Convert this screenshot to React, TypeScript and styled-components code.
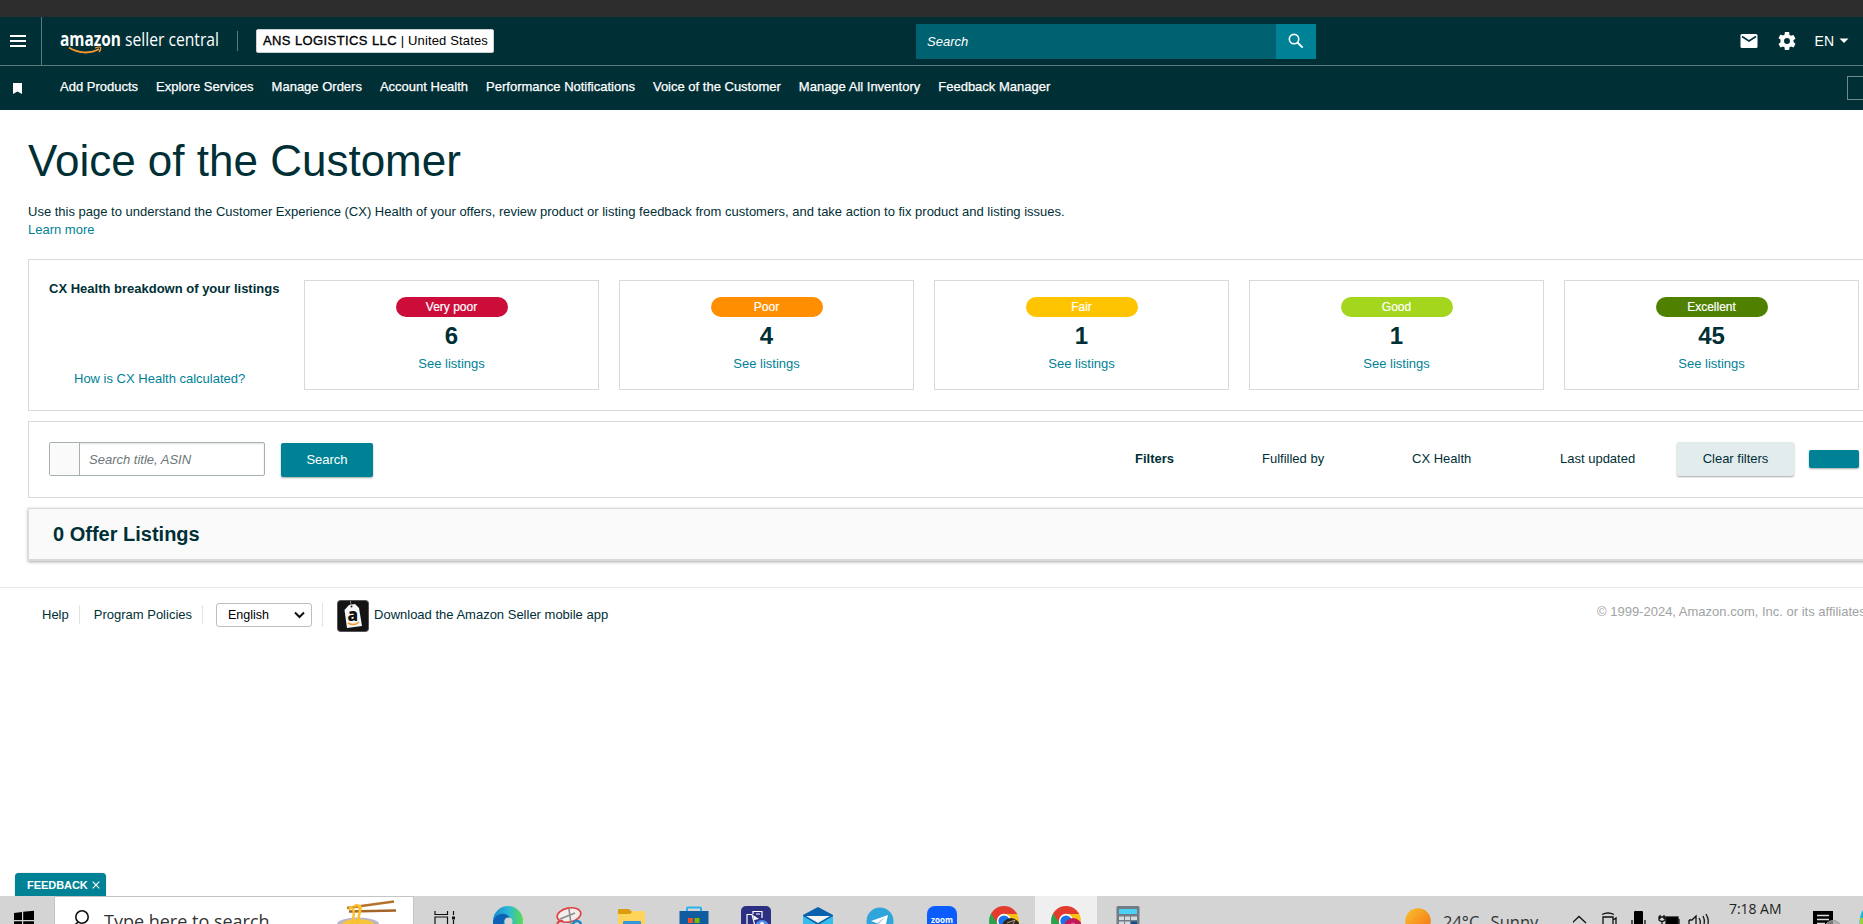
import React from 'react';
import styled, { createGlobalStyle } from 'styled-components';

const Global = createGlobalStyle`
  * { box-sizing: border-box; }
  html, body { margin: 0; padding: 0; overflow: hidden; background: #fff; }
  body { font-family: Arial, "Liberation Sans", sans-serif; font-size: 13px; color: #002f36; }
`;

const Screen = styled.div`
  width: 1863px; height: 924px; overflow: hidden;
  display: flex; flex-direction: column; position: relative; white-space: nowrap;
`;
const WindowEdge = styled.div`height: 17px; background: #2d2d2d; flex: none;`;

const Header = styled.header`
  height: 49px; flex: none; background: #002f36; border-bottom: 1px solid #5c7b7f;
  display: flex; align-items: center; color: #fff;
`;
const MenuButton = styled.div`
  width: 42px; height: 48px; border-right: 1px solid #5c7b7f; padding: 18px 0 0 10px;
  display: flex; flex-direction: column; gap: 3px;
`;
const MenuLine = styled.span`width: 16px; height: 2px; background: #fff;`;
const Logo = styled.svg`display: block; margin-left: 14px; width: 170px; height: 40px;`;
const HeaderRule = styled.div`width: 1px; height: 20px; background: #5c7b7f; margin-left: 11px;`;
const StoreBox = styled.div`
  margin-left: 18px; width: 238px; height: 24px; border: 1px solid #c9d0d1; border-radius: 2px;
  background: #fff; color: #000; line-height: 22px; padding-left: 6px;
`;
const StoreName = styled.span`letter-spacing: 0.4px; -webkit-text-stroke: 0.35px #000;`;
const StoreRegion = styled.span`letter-spacing: 0.15px;`;
const HeaderSearch = styled.div`margin-left: 422px; width: 400px; height: 35px; display: flex;`;
const HeaderSearchField = styled.div`
  flex: 1; background: #006170; font-style: italic; line-height: 35px; padding-left: 11px;
`;
const HeaderSearchButton = styled.div`
  width: 40px; background: #008296; display: flex; align-items: center; justify-content: center; padding-bottom: 1px;
`;
const HeaderTools = styled.div`
  margin-left: auto; padding-right: 14px; display: flex; align-items: center; height: 48px;
`;
const ToolIcon = styled.svg<{ $gap: number }>`display: block; margin-right: ${p => p.$gap}px;`;
const Lang = styled.span`font-size: 14px; margin-right: 5px;`;

const Nav = styled.nav`
  height: 44px; flex: none; background: #002f36; color: #fff; display: flex; align-items: center;
`;
const Bookmark = styled.svg`display: block; margin: 0 38px 0 13px;`;
const NavLinks = styled.div`
  display: flex; gap: 18px; line-height: 42px; height: 44px; -webkit-text-stroke: 0.25px #fff;
`;
const NavEdgeBox = styled.div`
  margin-left: auto; width: 16px; height: 24px; border: 1px solid #6f898c; border-right: 0;
`;

const Main = styled.main`padding-left: 28px; flex: none;`;
const Title = styled.h1`margin: 22px 0 0; font-size: 44px; line-height: 58px; font-weight: 400;`;
const Intro = styled.p`margin: 13px 0 0; line-height: 18px;`;
const Link = styled.a`color: #008296;`;

const Panel = styled.section<{ $height: number; $top: number }>`
  margin-top: ${p => p.$top}px; height: ${p => p.$height}px; width: 1860px;
  border: 1px solid #d5dbdb; display: flex; padding-left: 20px;
`;
const Breakdown = styled.div`
  width: 255px; padding: 20px 0 22px; display: flex; flex-direction: column; justify-content: space-between;
`;
const BreakdownTitle = styled.strong`line-height: 18px; display: block;`;
const BreakdownLink = styled(Link)`line-height: 18px; padding-left: 25px;`;
const Cards = styled.div`display: flex; gap: 20px; padding-top: 20px;`;
const HealthCard = styled.div`
  width: 295px; height: 110px; border: 1px solid #d5dbdb; padding-top: 16px;
  display: flex; flex-direction: column; align-items: center;
`;
const Badge = styled.span<{ $color: string }>`
  width: 112px; height: 20px; border-radius: 10px; background: ${p => p.$color}; color: #fff;
  font-size: 12px; line-height: 20px; text-align: center; -webkit-text-stroke: 0.2px #fff;
`;
const Count = styled.strong`font-size: 24px; line-height: 28px; margin-top: 5px;`;
const CardLink = styled(Link)`line-height: 18px; margin-top: 5px;`;

const SearchGroup = styled.div`
  width: 216px; height: 34px; margin-top: 20px; border: 1px solid #a6b1b3; border-radius: 2px; display: flex;
  box-shadow: inset 0 1px 2px rgba(0,0,0,.12);
`;
const SearchAddon = styled.div`width: 30px; background: #fafafa; border-right: 1px solid #a6b1b3;`;
const SearchField = styled.div`padding-left: 9px; line-height: 33px; font-style: italic; color: #6c7778;`;
const Button = styled.div<{ $width: number; $height?: number; $pale?: boolean }>`
  width: ${p => p.$width}px; height: ${p => p.$height ?? 34}px; line-height: 33px; text-align: center;
  background: ${p => (p.$pale ? '#e3eced' : '#008296')}; color: ${p => (p.$pale ? '#002f36' : '#fff')};
  border-radius: 2px; box-shadow: 0 1px 2px rgba(0,0,0,.35); flex: none;
`;
const SearchSubmit = styled(Button)`margin: 21px 0 0 16px;`;
const Filters = styled.div`
  margin-left: 762px; height: 75px; display: flex; align-items: center; padding-bottom: 1px;
`;
const FilterLabel = styled.span<{ $width: number; $bold?: boolean }>`
  width: ${p => p.$width}px; font-weight: ${p => (p.$bold ? 700 : 400)}; flex: none; padding-bottom: 2px;
`;
const ApplySlot = styled.div`margin-left: 15px;`;
const ListingHeader = styled(Panel)`
  background: #fafafa; border-bottom-width: 2px; align-items: center; padding-left: 24px;
  box-shadow: 0 1px 3px rgba(0,0,0,.35);
`;
const ListingTitle = styled.h2`margin: 0; font-size: 20px; line-height: 24px; padding-bottom: 1px;`;

const Footer = styled.footer`
  margin-top: 26px; border-top: 1px solid #e7e9e9; height: 60px; flex: none; display: flex; align-items: center;
  padding: 0 0 4px 42px;
`;
const FooterRule = styled.div<{ $h: number; $l: number; $r: number }>`
  width: 1px; height: ${p => p.$h}px; background: #dfe3e3; margin: 0 ${p => p.$r}px 2px ${p => p.$l}px;
`;
const FooterText = styled.span`line-height: 18px; padding-bottom: 2px;`;
const Select = styled.div`
  width: 96px; height: 24px; border: 1px solid #b9c0c1; border-radius: 3px; display: flex; align-items: center;
  justify-content: space-between; padding: 0 6px 0 11px; font-size: 12.5px; color: #000; margin-bottom: 2px;
`;
const AppIcon = styled.svg`display: block; margin-right: 5px;`;
const Copyright = styled.span`margin-left: auto; width: 266px; flex: none; color: #a0a3a3; padding-bottom: 8px;`;

const Feedback = styled.div`
  position: absolute; left: 15px; top: 873px; width: 91px; height: 23px; background: #008296; color: #fff;
  border-radius: 4px 4px 0 0; font-size: 11px; font-weight: 700; line-height: 24px; padding-left: 12px;
  box-shadow: 0 0 1px #678; display: flex; align-items: center; gap: 4px; letter-spacing: -0.05px;
`;

const Taskbar = styled.div`
  position: absolute; left: 0; bottom: 0; width: 1863px; height: 28px; overflow: hidden;
  background: #d4d4d4; display: flex; color: #333; font-family: "Segoe UI", "Open Sans", sans-serif;
`;
const StartButton = styled.div`width: 54px; height: 28px; flex: none;`;
const TaskSearch = styled.div`
  width: 360px; height: 28px; flex: none; background: #fff; border: 1px solid #c4c4c4; border-bottom: 0;
  display: flex; padding-left: 17px;
`;
const TaskSearchText = styled.span`
  font-size: 18px; line-height: 24px; padding-top: 12px; margin-left: 14px; width: 232px; height: 44px;
`;
const Apps = styled.div`display: flex; margin-left: 1px;`;
const TaskItem = styled.div<{ $active?: boolean }>`
  width: 62px; height: 28px; flex: none; display: flex; justify-content: center; padding-top: 10px;
  background: ${p => (p.$active ? '#efefef' : 'transparent')};
`;
const Tray = styled.div`margin-left: auto; width: 458px; display: flex; flex: none;`;
const Weather = styled.span`
  font-size: 16.5px; line-height: 24px; margin: 14px 0 0 12px; width: 130px; height: 30px; word-spacing: 7px;
`;
const Clock = styled.span`
  font-size: 14px; line-height: 20px; margin: 3px 0 0 20px; width: 84px; letter-spacing: -0.05px; color: #222;
`;
const TrayIcon = styled.svg`display: block; flex: none;`;

const cards = [
  { label: 'Very poor', color: '#cc0c39', count: 6 },
  { label: 'Poor', color: '#ff8f00', count: 4 },
  { label: 'Fair', color: '#ffc400', count: 1 },
  { label: 'Good', color: '#a4d61e', count: 1 },
  { label: 'Excellent', color: '#508000', count: 45 },
];
const links = ['Add Products', 'Explore Services', 'Manage Orders', 'Account Health', 'Performance Notifications',
  'Voice of the Customer', 'Manage All Inventory', 'Feedback Manager'];

const Icon = ({ children }: { children: React.ReactNode }) => (
  <svg width="30" height="30" viewBox="0 0 30 30">{children}</svg>
);
const Chrome = ({ avatar, id }: { avatar: React.ReactNode; id: string }) => (
  <Icon>
    <clipPath id={id}><circle cx="15" cy="15" r="15" /></clipPath>
    <g clipPath={`url(#${id})`}>
      <path d="M0 0H30V8H15L8 18L0 5Z" fill="#e33b2e" />
      <path d="M15 8H30V30H14L21 17Z" fill="#fbc116" />
      <path d="M1 6L9 18L16 22L12 30H0V6Z" fill="#2ba24c" />
    </g>
    <circle cx="15" cy="15" r="7.2" fill="#fff" /><circle cx="15" cy="15" r="5.6" fill="#1a73e8" />
    {avatar}
  </Icon>
);

export default function App() {
  return (
    <>
      <Global />
      <Screen>
        <WindowEdge />
        <Header>
          <MenuButton><MenuLine /><MenuLine /><MenuLine /></MenuButton>
          <Logo viewBox="0 0 170 40">
            <text x="4" y="24.500" fill="#fff" fontFamily="Open Sans" fontWeight="700" fontSize="19" textLength="61" lengthAdjust="spacingAndGlyphs">amazon</text>
            <text x="69" y="24.500" fill="#fff" fontFamily="Open Sans" fontSize="18.500" textLength="94" lengthAdjust="spacingAndGlyphs">seller central</text>
            <path d="M13 26.500C22 32.500 34 33 43 28" fill="none" stroke="#f79a2e" strokeWidth="2" />
            <path d="M39 27C42 26 44.500 25.800 44.800 26.600C45 27.500 44.500 29 43 31" fill="none" stroke="#f79a2e" strokeWidth="1.300" />
          </Logo>
          <HeaderRule />
          <StoreBox><StoreName>ANS LOGISTICS LLC</StoreName><StoreRegion> | United States</StoreRegion></StoreBox>
          <HeaderSearch>
            <HeaderSearchField>Search</HeaderSearchField>
            <HeaderSearchButton>
              <svg width="16" height="16" viewBox="0 0 18 18" fill="none" stroke="#fff"><circle cx="6.800" cy="6.800" r="5.300" strokeWidth="1.800" /><path d="M10.500 10.500L16.500 16.500" strokeWidth="2.200" /></svg>
            </HeaderSearchButton>
          </HeaderSearch>
          <HeaderTools>
            <ToolIcon $gap={20} width="18" height="16" viewBox="0 0 18 16"><rect x=".5" y="1" width="17" height="14" rx="1.500" fill="#fff" /><path d="M2 3.500L9 8L16 3.500" fill="none" stroke="#002f36" strokeWidth="1.500" /></ToolIcon>
            <ToolIcon $gap={19} width="18" height="18" viewBox="2 2 20 20"><path fill="#fff" d="M19.140 12.940c.040-.300.060-.610.060-.940s-.020-.640-.070-.940l2.030-1.580a.490.490 0 0 0 .120-.610l-1.920-3.320a.490.490 0 0 0-.590-.220l-2.390.960a7 7 0 0 0-1.620-.940l-.360-2.540A.480.480 0 0 0 13.920 2h-3.840a.480.480 0 0 0-.480.410l-.360 2.540a7 7 0 0 0-1.620.940l-2.390-.960a.480.480 0 0 0-.590.220L2.720 8.470a.480.480 0 0 0 .120.610l2.030 1.580a7.500 7.500 0 0 0 0 2.680l-2.030 1.580a.490.490 0 0 0-.120.610l1.920 3.320c.120.220.370.290.590.220l2.390-.960c.500.380 1.030.700 1.620.940l.360 2.540c.050.240.240.410.480.410h3.840c.240 0 .440-.170.480-.410l.360-2.540a7 7 0 0 0 1.620-.940l2.390.960c.220.080.470 0 .590-.220l1.920-3.320a.480.480 0 0 0-.120-.610zM12 15.300a3.300 3.300 0 1 1 0-6.600 3.300 3.300 0 0 1 0 6.600z" /></ToolIcon>
            <Lang>EN</Lang>
            <svg width="10" height="6"><path d="M0.500 .5H9.500L5 5Z" fill="#fff" /></svg>
          </HeaderTools>
        </Header>
        <Nav>
          <Bookmark width="9" height="11" viewBox="0 0 9 11"><path d="M0 0H9V11L4.500 8.500L0 11Z" fill="#fff" /></Bookmark>
          <NavLinks>{links.map(l => <span key={l}>{l}</span>)}</NavLinks>
          <NavEdgeBox />
        </Nav>
        <Main>
          <Title>Voice of the Customer</Title>
          <Intro>
            Use this page to understand the Customer Experience (CX) Health of your offers, review product or listing feedback from customers, and take action to fix product and listing issues.
            <br /><Link>Learn more</Link>
          </Intro>
          <Panel $top={20} $height={152}>
            <Breakdown>
              <BreakdownTitle>CX Health breakdown of your listings</BreakdownTitle>
              <BreakdownLink>How is CX Health calculated?</BreakdownLink>
            </Breakdown>
            <Cards>
              {cards.map(c => (
                <HealthCard key={c.label}>
                  <Badge $color={c.color}>{c.label}</Badge>
                  <Count>{c.count}</Count>
                  <CardLink>See listings</CardLink>
                </HealthCard>
              ))}
            </Cards>
          </Panel>
          <Panel $top={10} $height={77}>
            <SearchGroup><SearchAddon /><SearchField>Search title, ASIN</SearchField></SearchGroup>
            <SearchSubmit $width={92}>Search</SearchSubmit>
            <Filters>
              <FilterLabel $width={127} $bold>Filters</FilterLabel>
              <FilterLabel $width={150}>Fulfilled by</FilterLabel>
              <FilterLabel $width={148}>CX Health</FilterLabel>
              <FilterLabel $width={117}>Last updated</FilterLabel>
              <Button $width={117} $pale>Clear filters</Button>
              <ApplySlot><Button $width={50} $height={18} /></ApplySlot>
            </Filters>
          </Panel>
          <ListingHeader $top={10} $height={53}><ListingTitle>0 Offer Listings</ListingTitle></ListingHeader>
        </Main>
        <Footer>
          <FooterText>Help</FooterText>
          <FooterRule $h={19} $l={10} $r={14} />
          <FooterText>Program Policies</FooterText>
          <FooterRule $h={19} $l={10} $r={13} />
          <Select>English<svg width="11" height="8" viewBox="0 0 11 8"><path d="M1 1.500L5.500 6L10 1.500" fill="none" stroke="#111" strokeWidth="2" /></svg></Select>
          <FooterRule $h={24} $l={10} $r={14} />
          <AppIcon width="32" height="32" viewBox="0 0 32 32">
            <rect x=".5" y=".5" width="31" height="31" rx="3" fill="#141414" stroke="#555" />
            <path d="M13.500 1C13.500 3 13.800 4 14.500 6" stroke="#888" fill="none" />
            <path d="M7.500 10L12 5L18 4L22 8L25 26L10 28Z" fill="#f7f7f7" />
            <circle cx="14.500" cy="6.500" r="1" fill="#222" />
            <text x="10.500" y="21" fontFamily="Open Sans" fontWeight="800" fontSize="17" fill="#111">a</text>
            <path d="M11 23Q17 26.500 22 22" stroke="#f79a2e" strokeWidth="1.500" fill="none" />
          </AppIcon>
          <FooterText>Download the Amazon Seller mobile app</FooterText>
          <Copyright>© 1999-2024, Amazon.com, Inc. or its affiliates</Copyright>
        </Footer>
        <Feedback>FEEDBACK<svg width="8" height="8" viewBox="0 0 8 8"><path d="M.7 .7L7.300 7.300M7.300 .7L.7 7.300" stroke="#fff" strokeWidth="1.200" /></svg></Feedback>
        <Taskbar>
          <StartButton>
            <svg width="54" height="28"><path d="M14 17L22 16V24H14ZM23.200 15.800L34 14.700V24H23.200ZM14 25.200H22V28H14ZM23.200 25.200H34V28H23.200Z" fill="#000" /></svg>
          </StartButton>
          <TaskSearch>
            <TrayIcon width="18" height="27" fill="none" stroke="#111" strokeWidth="1.600"><circle cx="10" cy="20" r="6.200" /><path d="M6 25L2 29" /></TrayIcon>
            <TaskSearchText>Type here to search</TaskSearchText>
            <TrayIcon width="62" height="27" viewBox="0 0 62 27">
              <ellipse cx="22" cy="27" rx="21" ry="6.500" fill="#b9b4cb" /><ellipse cx="22" cy="27.500" rx="16" ry="5.500" fill="#f5c53a" />
              <path d="M11 11L58 4.500" stroke="#b5722c" strokeWidth="2.400" /><path d="M13 14.500L60 13.500" stroke="#a3652a" strokeWidth="2.400" />
              <path d="M13 13Q15 8 17 12T16 26M18 10Q21 6 23 10T21 26M22 9Q26 8 24 15T22 26" stroke="#fbc02d" strokeWidth="2.500" fill="none" />
            </TrayIcon>
          </TaskSearch>
          <Apps>
            <TaskItem><Icon><path d="M4 5V8.500H16.500V5M4 20V11H16.500V20M22.500 5V9M22.500 14V20" fill="none" stroke="#111" strokeWidth="1.200" /><rect x="21" y="10.500" width="3" height="3" fill="#111" /></Icon></TaskItem>
            <TaskItem><Icon><defs><linearGradient id="edge" x1="0" x2="1"><stop stopColor="#168bd1" /><stop offset=".5" stopColor="#2ab8d8" /><stop offset="1" stopColor="#5cdc4c" /></linearGradient></defs><circle cx="15" cy="15" r="15" fill="url(#edge)" /><path d="M0 16C2 7 13 5 17 12C11 11 9 17 12 22H0Z" fill="#0c63b5" /><circle cx="15.500" cy="15.500" r="4" fill="#d4d4d4" /></Icon></TaskItem>
            <TaskItem><Icon><ellipse cx="14" cy="9" rx="12" ry="7" fill="#f3eeee" stroke="#dd4444" strokeWidth="1.600" transform="rotate(-12 14 9)" /><path d="M14 3L16 18M5 13L20 7" stroke="#8b8b8b" strokeWidth="1.600" /><path d="M2 18Q4 14 8 15" stroke="#dd4444" strokeWidth="2" fill="none" /><circle cx="22" cy="19" r="4" fill="none" stroke="#1c83c6" strokeWidth="2.500" /></Icon></TaskItem>
            <TaskItem><Icon><path d="M1 4Q1 3 2 3H12L15 6H27V22H1Z" fill="#dc9d0b" /><path d="M1 8H13L16 5H27Q28 5 28 7V22H1Z" fill="#ffd45b" /><rect x="6" y="15" width="18" height="8" rx="1" fill="#3595df" /></Icon></TaskItem>
            <TaskItem><Icon><path d="M8 6V2.500Q8 1.500 9 1.500H21Q22 1.500 22 2.500V6" stroke="#28b4ee" strokeWidth="2" fill="none" /><path d="M.5 5H29.500V24H.5Z" fill="#115b9f" /><rect x="9" y="12" width="5" height="5" fill="#f25022" /><rect x="15.500" y="12" width="5" height="5" fill="#7fba00" /></Icon></TaskItem>
            <TaskItem><Icon><rect width="30" height="30" rx="5" fill="#2c2f82" /><path d="M12 8V5.500H21V12M6 8.500H11L14 20H6ZM15 8H19" fill="none" stroke="#fff" strokeWidth="1.200" /><path d="M12 9L18 13L13 14Z" fill="#fff" /><circle cx="21" cy="21" r="7" fill="#4f8ff0" /><circle cx="21" cy="18" r="2" fill="#fff" /></Icon></TaskItem>
            <TaskItem><Icon><path d="M0 9L15 1L30 9V25H0Z" fill="#0861ad" /><path d="M0 10L15 19L30 10V26H0Z" fill="#36bdee" /><path d="M3 10H27L15 17Z" fill="#f3f3f3" /></Icon></TaskItem>
            <TaskItem><Icon><circle cx="15" cy="15" r="13.500" fill="#30a5dc" /><path d="M6 15L23 9L20 23L14 18Z" fill="#fff" /><path d="M12 17L20 11L14 18" fill="#aacfe6" /></Icon></TaskItem>
            <TaskItem><Icon><rect width="30" height="30" rx="8" fill="#0b5cff" /><text x="4" y="17" fill="#fff" fontFamily="Open Sans" fontWeight="700" fontSize="8.500" textLength="22" lengthAdjust="spacingAndGlyphs">zoom</text></Icon></TaskItem>
            <TaskItem><Chrome id="c1" avatar={<><circle cx="22" cy="21" r="9" fill="#30271f" /><path d="M18 17L26 14L24 18" stroke="#b0a48b" fill="none" /></>} /></TaskItem>
            <TaskItem $active><Chrome id="c2" avatar={<><circle cx="22" cy="21" r="9" fill="#c2185b" /><path d="M20 18Q22 16 24 18" stroke="#e4759f" fill="none" /></>} /></TaskItem>
            <TaskItem><Icon><rect x="3.500" width="23" height="30" rx="1.500" fill="#737b84" /><rect x="6" y="3" width="18" height="5" rx=".5" fill="#4bd1f5" /><path d="M6 10.500H11V14H6ZM12 10.500H17V14H12ZM18 10.500H24V14H18ZM6 15.500H11V19H6ZM12 15.500H17V19H12Z" fill="#d4dadf" /><path d="M18 15.500H24V19H18Z" fill="#124f91" /></Icon></TaskItem>
          </Apps>
          <Tray>
            <TrayIcon width="26" height="28"><defs><linearGradient id="sun" x1="0" y1="0" x2="1" y2="1"><stop stopColor="#f9c22e" /><stop offset="1" stopColor="#f46d13" /></linearGradient></defs><circle cx="13" cy="25" r="12.800" fill="url(#sun)" /></TrayIcon>
            <Weather>24°C Sunny</Weather>
            <TrayIcon width="136" height="28" viewBox="1 0 136 28" fill="none" stroke="#111" strokeWidth="1.300">
              <path d="M0 27L7 20.500L14 27" />
              <path d="M30 18.500Q36 15.500 42 18.500M31 28V21H41V28M41 24L44 22V28" />
              <rect x="62" y="15" width="9" height="15" rx="1" fill="#000" stroke="none" /><path d="M60 24V28M73 24V28" />
              <path d="M88 19V23M92 19V23M87 21H93V24Q90 27 87 24ZM90 26V28" /><rect x="94" y="21" width="12" height="8" fill="#000" /><path d="M107 23V28" />
              <path d="M117 24H120L124 20V28M117 24V28M127 22Q129 25 128 28M131 20Q133 24 132 28M134 18Q137 23 136 28" />
            </TrayIcon>
            <Clock>7:18 AM</Clock>
            <TrayIcon width="50" height="28" viewBox="0 0 50 28"><path d="M0 15H20V28H0Z" fill="#000" /><path d="M4 19.500H16M4 23.500H16M4 27.500H12" stroke="#ddd" strokeWidth="1.400" /><circle cx="20" cy="33" r="8.500" fill="#aaa" fillOpacity=".7" stroke="#999" /><path d="M50 14Q46.500 19 46.500 28H50Z" fill="#21b5d8" /><path d="M50 22H47V28H50Z" fill="#9ad136" /></TrayIcon>
          </Tray>
        </Taskbar>
      </Screen>
    </>
  );
}
